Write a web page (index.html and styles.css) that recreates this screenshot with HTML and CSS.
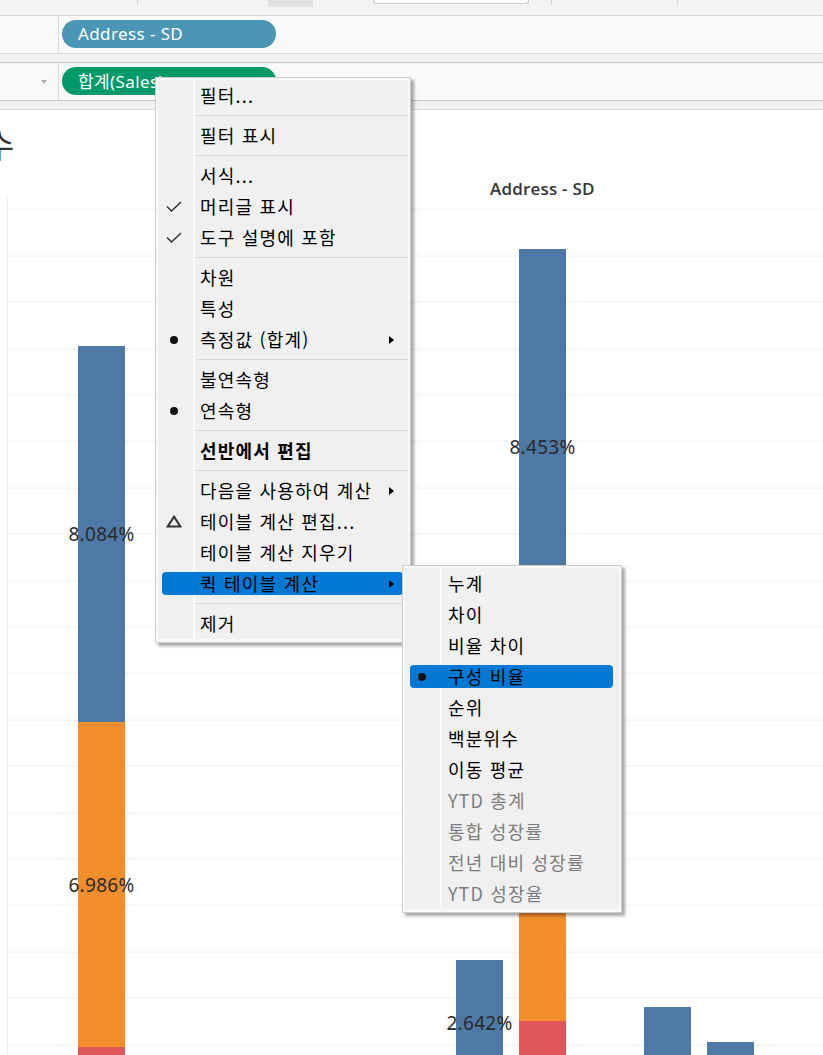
FILE: index.html
```html
<!DOCTYPE html>
<html lang="ko">
<head>
    <meta charset="UTF-8">
    <title>Sheet - 구성 비율</title>
    <link rel="stylesheet" href="styles.css">
</head>
<body>
    <div class="app">
        <div class="toolbar">
            <span class="tb-line tb-1"></span>
            <span class="tb-btn"></span>
            <span class="tb-field"></span>
            <span class="tb-line tb-2"></span>
            <span class="tb-line tb-3"></span>
        </div>

        <div class="shelf">
            <div class="shelf-label"></div>
            <div class="shelf-body"><span class="pill pill-dim">Address - SD</span></div>
        </div>
        <div class="shelf-gap dark"></div>
        <div class="shelf shelf-dark">
            <div class="shelf-label"><span class="drop"></span></div>
            <div class="shelf-body"><span class="pill pill-measure">합계(Sales)</span></div>
        </div>
        <div class="shelf-gap"></div>

        <div class="canvas">
            <div class="title">수</div>
            <div class="pane-head">Address - SD</div>
            <div class="chart">
                <div class="bar bar-a">
                    <div class="seg blue" style="height:376px">8.084%</div>
                    <div class="seg orange" style="height:325px">6.986%</div>
                    <div class="seg red" style="height:83px"></div>
                </div>
                <div class="bar bar-b">
                    <div class="seg blue" style="height:126px">2.642%</div>
                    <div class="seg orange" style="height:44px"></div>
                </div>
                <div class="bar bar-c">
                    <div class="seg blue" style="height:396px">8.453%</div>
                    <div class="seg orange" style="height:376px"></div>
                    <div class="seg red" style="height:109px"></div>
                </div>
                <div class="bar bar-d">
                    <div class="seg blue" style="height:110px">1.203%</div>
                    <div class="seg orange" style="height:13px"></div>
                </div>
                <div class="bar bar-e">
                    <div class="seg blue" style="height:88px"></div>
                </div>
            </div>
        </div>

        <!-- context menu on the 합계(Sales) pill -->
        <div class="menu main-menu">
            <div class="menu-list">
                <div class="item"><div class="item-in"><span class="mark"></span><span class="label">필터...</span></div></div>
                <div class="sep"></div>
                <div class="item"><div class="item-in"><span class="mark"></span><span class="label">필터 표시</span></div></div>
                <div class="sep"></div>
                <div class="item"><div class="item-in"><span class="mark"></span><span class="label">서식...</span></div></div>
                <div class="item"><div class="item-in"><span class="mark"><svg width="16" height="11" viewBox="0 0 16 11"><polyline points="1,5.5 5.5,10 15,1" fill="none" stroke="#333" stroke-width="1.5"/></svg></span><span class="label">머리글 표시</span></div></div>
                <div class="item"><div class="item-in"><span class="mark"><svg width="16" height="11" viewBox="0 0 16 11"><polyline points="1,5.5 5.5,10 15,1" fill="none" stroke="#333" stroke-width="1.5"/></svg></span><span class="label">도구 설명에 포함</span></div></div>
                <div class="sep"></div>
                <div class="item"><div class="item-in"><span class="mark"></span><span class="label">차원</span></div></div>
                <div class="item"><div class="item-in"><span class="mark"></span><span class="label">특성</span></div></div>
                <div class="item"><div class="item-in"><span class="mark"><span class="dot"></span></span><span class="label">측정값 (합계)</span><span class="arrow"></span></div></div>
                <div class="sep"></div>
                <div class="item"><div class="item-in"><span class="mark"></span><span class="label">불연속형</span></div></div>
                <div class="item"><div class="item-in"><span class="mark"><span class="dot"></span></span><span class="label">연속형</span></div></div>
                <div class="sep"></div>
                <div class="item"><div class="item-in"><span class="mark"></span><span class="label bold">선반에서 편집</span></div></div>
                <div class="sep"></div>
                <div class="item"><div class="item-in"><span class="mark"></span><span class="label">다음을 사용하여 계산</span><span class="arrow"></span></div></div>
                <div class="item"><div class="item-in"><span class="mark"><svg width="16" height="13" viewBox="0 0 16 13"><polygon points="8,1.6 14.4,11.6 1.6,11.6" fill="none" stroke="#333" stroke-width="2"/></svg></span><span class="label">테이블 계산 편집...</span></div></div>
                <div class="item"><div class="item-in"><span class="mark"></span><span class="label">테이블 계산 지우기</span></div></div>
                <div class="item active"><div class="item-in"><span class="mark"></span><span class="label">퀵 테이블 계산</span><span class="arrow"></span></div></div>
                <div class="sep"></div>
                <div class="item"><div class="item-in"><span class="mark"></span><span class="label">제거</span></div></div>
            </div>
        </div>

        <div class="menu sub-menu">
            <div class="menu-list">
                <div class="item"><div class="item-in"><span class="mark"></span><span class="label">누계</span></div></div>
                <div class="item"><div class="item-in"><span class="mark"></span><span class="label">차이</span></div></div>
                <div class="item"><div class="item-in"><span class="mark"></span><span class="label">비율 차이</span></div></div>
                <div class="item active"><div class="item-in"><span class="mark"><span class="dot"></span></span><span class="label">구성 비율</span></div></div>
                <div class="item"><div class="item-in"><span class="mark"></span><span class="label">순위</span></div></div>
                <div class="item"><div class="item-in"><span class="mark"></span><span class="label">백분위수</span></div></div>
                <div class="item"><div class="item-in"><span class="mark"></span><span class="label">이동 평균</span></div></div>
                <div class="item off"><div class="item-in"><span class="mark"></span><span class="label">YTD 총계</span></div></div>
                <div class="item off"><div class="item-in"><span class="mark"></span><span class="label">통합 성장률</span></div></div>
                <div class="item off"><div class="item-in"><span class="mark"></span><span class="label">전년 대비 성장률</span></div></div>
                <div class="item off"><div class="item-in"><span class="mark"></span><span class="label">YTD 성장율</span></div></div>
            </div>
        </div>
    </div>
</body>
</html>
```

FILE: styles.css
```css
* {
    box-sizing: border-box;
}

body {
    margin: 0;
    width: 823px;
    height: 1055px;
    overflow: hidden;
    background: #fff;
    color: #222;
    font-family: "Noto Sans", "Noto Sans CJK KR", sans-serif;
}

.app {
    position: relative;
    width: 823px;
    height: 1055px;
    overflow: hidden;
}

/* top toolbar strip */
.toolbar {
    height: 16px;
    display: flex;
    align-items: flex-start;
    background: #f3f3f3;
    border-bottom: 1px solid #d6d6d6;
}

.tb-line {
    width: 1px;
    height: 5px;
    background: #cfcfcf;
}

.tb-1 { margin-left: 137px; }
.tb-2 { margin-left: 22px; }
.tb-3 { margin-left: 125px; }

.tb-btn {
    width: 45px;
    height: 7px;
    margin-left: 130px;
    background: #e2e2e2;
}

.tb-field {
    width: 156px;
    height: 4px;
    margin-left: 60px;
    background: #fff;
    border: 1px solid #c9c9c9;
    border-top: none;
    border-radius: 0 0 3px 3px;
}

/* shelves */
.shelf {
    height: 38px;
    display: flex;
    background: #f9f9f9;
    border-bottom: 1px solid #dadada;
}

.shelf-dark {
    border-bottom-color: #c6c6c6;
}

.shelf-label {
    width: 59px;
    display: flex;
    align-items: center;
    border-right: 1px solid #dadada;
}

.drop {
    width: 0;
    height: 0;
    margin-left: 41px;
    border-left: 3.5px solid transparent;
    border-right: 3.5px solid transparent;
    border-top: 4px solid #a9a9a9;
}

.shelf-body {
    padding: 4px 0 0 3px;
}

.pill {
    width: 214px;
    height: 28px;
    display: flex;
    align-items: center;
    padding: 0 0 2px 16px;
    border-radius: 14px;
    color: #fff;
    font-size: 17px;
    letter-spacing: 0.4px;
}

.pill-dim { background: #4a96b4; }
.pill-measure { background: #00996a; }

.shelf-gap {
    height: 9px;
    background: #f2f2f2;
    border-bottom: 1px solid #dadada;
}

.shelf-gap.dark {
    border-bottom-color: #c6c6c6;
}

/* view */
.title {
    height: 70px;
    padding-top: 15px;
    margin-left: -16px;
    font-family: "Noto Sans CJK KR", sans-serif;
    font-size: 33px;
    line-height: 38px;
    color: #333;
}

.pane-head {
    height: 17px;
    padding-left: 490px;
    font-family: "Open Sans", "Noto Sans", sans-serif;
    font-size: 17px;
    font-weight: 600;
    line-height: 17px;
    letter-spacing: 0.2px;
    color: #333;
}

.chart {
    height: 933px;
    margin-left: 7px;
    display: flex;
    align-items: flex-end;
    border-left: 1px solid #eeeeee;
    background-image: repeating-linear-gradient(to bottom, transparent 0, transparent 45.4px, #efefef 45.4px, #efefef 46.4px);
    background-position: 0 -33.4px;
}

.bar {
    width: 47px;
    display: flex;
    flex-direction: column;
}

.bar-a { margin-left: 70px; }
.bar-b { margin-left: 331px; }
.bar-c { margin-left: 16px; }
.bar-d { margin-left: 78px; }
.bar-e { margin-left: 16px; }

.seg {
    display: flex;
    align-items: center;
    justify-content: center;
    white-space: nowrap;
    font-size: 19px;
    letter-spacing: 0.3px;
    color: #2a2a2a;
}

.blue { background: #4e79a7; }
.orange { background: #f28e2b; }
.red { background: #e15759; }

/* context menus */
.menu {
    position: absolute;
    padding: 2px 2px 3px;
    background: #f8f8f8;
    border: 1px solid #cdcdcd;
    box-shadow: 3px 3px 3px rgba(0, 0, 0, 0.35);
    font-family: "Noto Sans CJK KR", sans-serif;
    font-size: 18px;
    letter-spacing: 1.2px;
    color: #000;
}

.main-menu {
    left: 155px;
    top: 77px;
    width: 256px;
}

.sub-menu {
    left: 402px;
    top: 565px;
    width: 220px;
    padding: 2px 2px 3px;
}

.menu-list {
    background: linear-gradient(to right, #f0f0f0 35px, #fbfbfb 35px, #fbfbfb 37px, #f0f0f0 37px);
}

.item {
    height: 31px;
    padding: 4px 5px 4px 4px;
}

.item-in {
    height: 23px;
    display: flex;
    align-items: center;
    border-radius: 4px;
}

.item.active .item-in {
    background: #0078d4;
}

.mark {
    width: 23px;
    flex: none;
    display: flex;
    justify-content: center;
    align-items: center;
}

.label {
    flex: 1;
    margin-left: 15px;
    line-height: 23px;
    white-space: nowrap;
}

.bold {
    font-weight: 700;
}

.item.off .label {
    color: #7d7d7d;
}

.dot {
    width: 8px;
    height: 8px;
    border-radius: 50%;
    background: #111;
}

.arrow {
    width: 0;
    height: 0;
    margin-right: 9px;
    border-left: 5px solid #000;
    border-top: 4.5px solid transparent;
    border-bottom: 4.5px solid transparent;
}

.sep {
    height: 9px;
    margin-left: 37px;
    background: linear-gradient(#d7d7d7, #d7d7d7) 0 4px / 100% 1px no-repeat;
}

.sub-menu .item {
    padding: 4px 6px 4px 5px;
}

.sub-menu .mark {
    width: 24px;
}

.sub-menu .label {
    margin-left: 14px;
}
```
